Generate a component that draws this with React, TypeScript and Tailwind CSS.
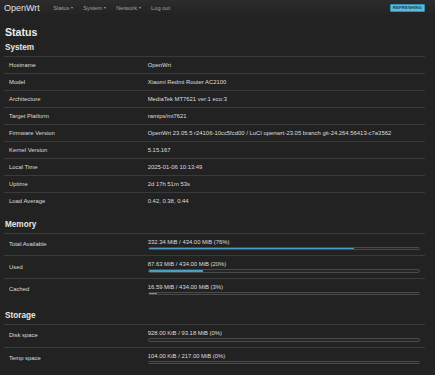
import React from 'react';

type Row = { label: string; value: string };
type BarRow = { label: string; text: string; pct: number };

const systemRows: Row[] = [
  { label: 'Hostname', value: 'OpenWrt' },
  { label: 'Model', value: 'Xiaomi Redmi Router AC2100' },
  { label: 'Architecture', value: 'MediaTek MT7621 ver:1 eco:3' },
  { label: 'Target Platform', value: 'ramips/mt7621' },
  { label: 'Firmware Version', value: 'OpenWrt 23.05.5 r24106-10cc5fcd00 / LuCI openwrt-23.05 branch git-24.264.56413-c7a3562' },
  { label: 'Kernel Version', value: '5.15.167' },
  { label: 'Local Time', value: '2025-01-06 10:13:49' },
  { label: 'Uptime', value: '2d 17h 51m 53s' },
  { label: 'Load Average', value: '0.42, 0.38, 0.44' },
];

const memoryRows: BarRow[] = [
  { label: 'Total Available', text: '332.34 MiB / 434.00 MiB (76%)', pct: 76 },
  { label: 'Used', text: '87.63 MiB / 434.00 MiB (20%)', pct: 20 },
  { label: 'Cached', text: '16.59 MiB / 434.00 MiB (3%)', pct: 3 },
];

const storageRows: BarRow[] = [
  { label: 'Disk space', text: '928.00 KiB / 93.18 MiB (0%)', pct: 0 },
  { label: 'Temp space', text: '104.00 KiB / 217.00 MiB (0%)', pct: 0 },
];

const NavItem: React.FC<{ label: string; caret?: boolean }> = ({ label, caret }) => (
  <span className="flex items-center text-[5.7px] text-[#a0a0a0]">
    {label}
    {caret && (
      <span className="ml-[2px] w-0 h-0 border-l-[1.5px] border-r-[1.5px] border-t-[2px] border-l-transparent border-r-transparent border-t-[#a0a0a0]" />
    )}
  </span>
);

const SectionTitle: React.FC<{ title: string; className?: string }> = ({ title, className }) => (
  <h3 className={`text-[8.2px] font-bold leading-[10px] text-[#e6e6e6] pl-[1px] pb-[3px] ${className ?? ''}`}>{title}</h3>
);

const BarTable: React.FC<{ rows: BarRow[] }> = ({ rows }) => (
  <div>
    {rows.map((r) => (
      <div key={r.label} className="flex items-center h-[22.4px] border-t border-[#3a3a3a]">
        <div className="w-[143.7px] pl-[5px] text-[5.9px] text-[#dcdcdc]">{r.label}</div>
        <div className="flex-1 pr-[5px] flex flex-col gap-[1px]">
          <span className="text-[5.9px] leading-[7px] text-[#dedede]">{r.text}</span>
          <div className="h-[3.5px] rounded-[2px] border border-[#4a4a4a] bg-[#262626] overflow-hidden">
            <div className="h-full bg-[#4a9fc2]" style={{ width: `${r.pct}%` }} />
          </div>
        </div>
      </div>
    ))}
  </div>
);

export default function App() {
  return (
    <div className="w-[435px] h-[375px] overflow-hidden bg-[#222222] font-['Liberation_Sans',Arial,sans-serif]">
      {/* top bar */}
      <div className="h-[16px] flex items-center px-[4px] bg-gradient-to-b from-[#2c2c2c] to-[#222222]">
        <span className="text-[9px] text-[#e2e2e2] leading-none mr-[13.3px]">OpenWrt</span>
        <div className="flex items-center gap-[10px]">
          <NavItem label="Status" caret />
          <NavItem label="System" caret />
          <NavItem label="Network" caret />
          <NavItem label="Log out" />
        </div>
        <span className="ml-auto mr-[6px] h-[7.5px] px-[2px] flex items-center rounded-[1px] border border-[#2f8fb5] bg-[#5bb9dd] text-[4.3px] font-bold text-[#1d3a48] tracking-[0.1px]">
          REFRESHING
        </span>
      </div>

      <div className="px-[4px]">
        <h2 className="pt-[10px] text-[10.6px] font-bold leading-[12px] text-[#eeeeee] pl-[1px]">Status</h2>

        <SectionTitle title="System" className="mt-[5px]" />
        <div className="w-[421px]">
          {systemRows.map((r) => (
            <div key={r.label} className="flex items-center h-[17px] border-t border-[#3a3a3a]">
              <div className="w-[143.7px] pl-[5px] text-[5.9px] text-[#dcdcdc]">{r.label}</div>
              <div className="flex-1 text-[5.9px] text-[#dedede] whitespace-nowrap">{r.value}</div>
            </div>
          ))}
        </div>

        <SectionTitle title="Memory" className="mt-[11px]" />
        <div className="w-[421px]">
          <BarTable rows={memoryRows} />
        </div>

        <SectionTitle title="Storage" className="mt-[11px]" />
        <div className="w-[421px]">
          <BarTable rows={storageRows} />
        </div>
      </div>
    </div>
  );
}
